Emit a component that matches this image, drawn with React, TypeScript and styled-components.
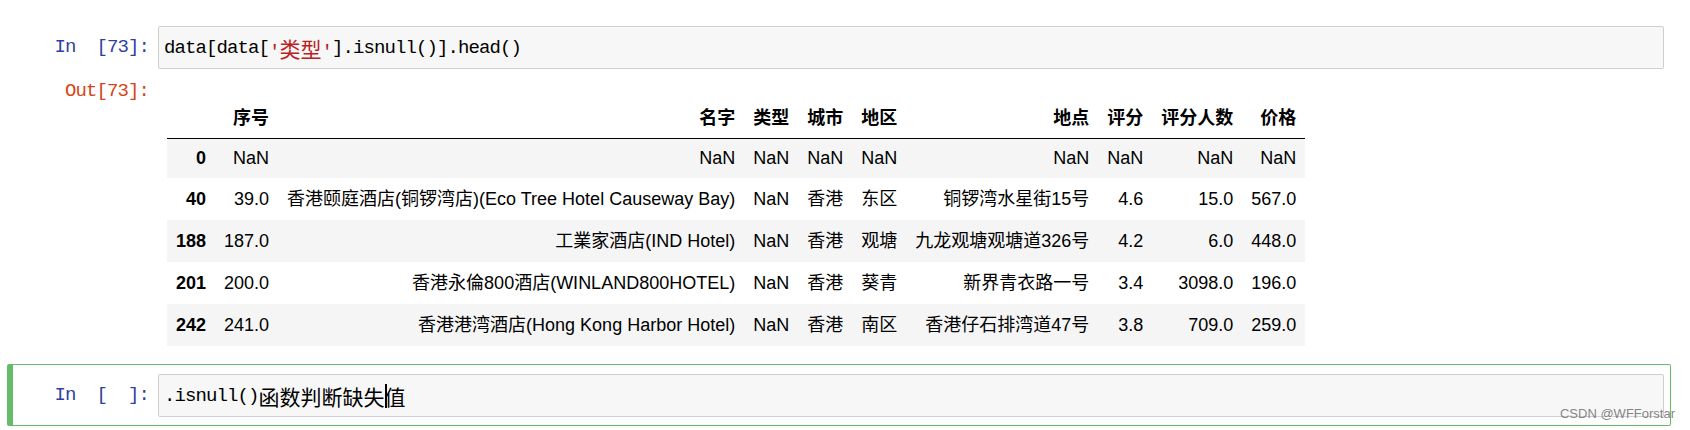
import React from "react";
import styled, { createGlobalStyle } from "styled-components";

type Row = {
    index: string;
    cells: string[];
    tight?: boolean;
};

const columns = ["序号", "名字", "类型", "城市", "地区", "地点", "评分", "评分人数", "价格"];

const rows: Row[] = [
    { index: "0", cells: ["NaN", "NaN", "NaN", "NaN", "NaN", "NaN", "NaN", "NaN", "NaN"], tight: true },
    { index: "40", cells: ["39.0", "香港颐庭酒店(铜锣湾店)(Eco Tree Hotel Causeway Bay)", "NaN", "香港", "东区", "铜锣湾水星街15号", "4.6", "15.0", "567.0"] },
    { index: "188", cells: ["187.0", "工業家酒店(IND Hotel)", "NaN", "香港", "观塘", "九龙观塘观塘道326号", "4.2", "6.0", "448.0"] },
    { index: "201", cells: ["200.0", "香港永倫800酒店(WINLAND800HOTEL)", "NaN", "香港", "葵青", "新界青衣路一号", "3.4", "3098.0", "196.0"] },
    { index: "242", cells: ["241.0", "香港港湾酒店(Hong Kong Harbor Hotel)", "NaN", "香港", "南区", "香港仔石排湾道47号", "3.8", "709.0", "259.0"] },
];

const GlobalStyle = createGlobalStyle`
    html, body {
        margin: 0;
        padding: 0;
        background: #ffffff;
    }
    body {
        width: 1690px;
        height: 430px;
        overflow: hidden;
    }
`;

const Notebook = styled.div`
    position: relative;
    padding: 16px 19px 0 7px;
`;

const Cell = styled.div<{ $selected?: boolean }>`
    border: 1px solid ${props => (props.$selected ? "#66BB6A" : "transparent")};
    border-left-width: 6px;
    border-radius: 2px;
    padding: 9px 6px 8px 0;
`;

const InputRow = styled.div`
    display: flex;
    align-items: flex-start;
`;

const Prompt = styled.div<{ $out?: boolean }>`
    flex: 0 0 145px;
    box-sizing: border-box;
    padding-right: 9px;
    text-align: right;
    white-space: pre;
    font-family: "Liberation Mono", monospace;
    font-size: 19px;
    letter-spacing: -0.9px;
    line-height: ${props => (props.$out ? "24px" : "43px")};
    color: ${props => (props.$out ? "#D84315" : "#303F9F")};
`;

const CodeBox = styled.div`
    flex: 1;
    box-sizing: border-box;
    height: 43px;
    padding: 0 5px;
    background: #f7f7f7;
    border: 1px solid #cfcfcf;
    border-radius: 2px;
    display: flex;
    align-items: center;
    font-family: "Liberation Mono", "Noto Sans CJK SC", monospace;
    font-size: 19px;
    letter-spacing: -0.9px;
    color: #000000;
    white-space: pre;
`;

const Cjk = styled.span`
    font-family: "Noto Sans CJK SC", sans-serif;
    font-size: 21px;
    letter-spacing: 0;
`;

const Str = styled.span`
    color: #BA2121;
`;

const Cursor = styled.span`
    display: inline-block;
    width: 2px;
    height: 24px;
    margin-right: -2px;
    background: #000000;
    vertical-align: middle;
`;

const OutputRow = styled.div`
    display: flex;
    align-items: flex-start;
    padding: 10px 0 9px;
`;

const OutputBody = styled.div`
    flex: 1;
`;

const Table = styled.table`
    margin: 19px 0 0 9px;
    border-collapse: collapse;
    border-spacing: 0;
    font-family: "Liberation Sans", "Noto Sans CJK SC", sans-serif;
    font-size: 18px;
    color: #000000;
`;

const Head = styled.thead`
    border-bottom: 1px solid #000000;
`;

const HeadCell = styled.th`
    padding: 8px 9px;
    line-height: 24px;
    text-align: right;
    font-weight: bold;
    white-space: nowrap;
`;

const BodyRow = styled.tr<{ $tight?: boolean }>`
    line-height: ${props => (props.$tight ? "21px" : "24px")};
    &:nth-child(odd) {
        background: #f5f5f5;
    }
`;

const IndexCell = styled.th`
    padding: 9px;
    text-align: right;
    font-weight: bold;
    white-space: nowrap;
`;

const DataCell = styled.td`
    padding: 9px;
    text-align: right;
    white-space: nowrap;
`;

const Watermark = styled.div`
    position: absolute;
    right: 15px;
    top: 406px;
    font-family: "Liberation Sans", sans-serif;
    font-size: 13px;
    color: rgba(110, 110, 110, 0.85);
    white-space: nowrap;
`;

const DataFrame: React.FC = () => (
    <Table>
        <Head>
            <tr>
                <HeadCell />
                {columns.map(col => (
                    <HeadCell key={col}>{col}</HeadCell>
                ))}
            </tr>
        </Head>
        <tbody>
            {rows.map(row => (
                <BodyRow key={row.index} $tight={row.tight}>
                    <IndexCell>{row.index}</IndexCell>
                    {row.cells.map((value, i) => (
                        <DataCell key={i}>{value}</DataCell>
                    ))}
                </BodyRow>
            ))}
        </tbody>
    </Table>
);

const App: React.FC = () => {
    return (
        <>
            <GlobalStyle />
            <Notebook>
                <Cell>
                    <InputRow>
                        <Prompt>{"In\u00a0\u00a0[73]:"}</Prompt>
                        <CodeBox>
                            data[data[<Str>'<Cjk>类型</Cjk>'</Str>].isnull()].head()
                        </CodeBox>
                    </InputRow>
                    <OutputRow>
                        <Prompt $out>Out[73]:</Prompt>
                        <OutputBody>
                            <DataFrame />
                        </OutputBody>
                    </OutputRow>
                </Cell>
                <Cell $selected>
                    <InputRow>
                        <Prompt>{"In\u00a0\u00a0[\u00a0\u00a0]:"}</Prompt>
                        <CodeBox>
                            .isnull()<Cjk>函数判断缺失</Cjk><Cursor /><Cjk>值</Cjk>
                        </CodeBox>
                    </InputRow>
                </Cell>
                <Watermark>CSDN @WFForstar</Watermark>
            </Notebook>
        </>
    );
};

export default App;
